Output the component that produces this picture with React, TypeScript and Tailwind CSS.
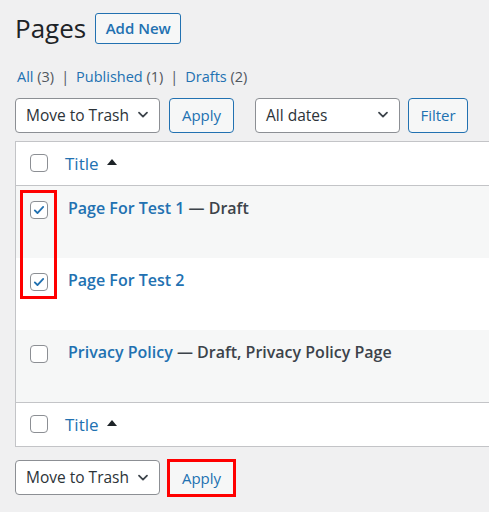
import React from "react";

const font = { fontFamily: '"Open Sans", "Noto Sans", sans-serif' };

const Chevron = () => (
  <svg width="16" height="16" viewBox="0 0 20 20" className="shrink-0">
    <path d="M5 7l5 5 5-5" fill="none" stroke="#3c434a" strokeWidth="2.2" strokeLinecap="round" strokeLinejoin="round" />
  </svg>
);

const Select = ({ label }: { label: string }) => (
  <div className="flex h-[35px] w-[145px] items-center justify-between rounded-[4px] border border-[#8c8f94] bg-white pl-[10px] pr-[8px] text-[15.5px] whitespace-nowrap text-[#2c3338]">
    <span>{label}</span>
    <Chevron />
  </div>
);

const Button = ({ label, w }: { label: string; w: string }) => (
  <div
    className={`flex h-[35px] items-center justify-center rounded-[4px] border border-[#2271b1] bg-[#f6f7f7] text-[15px] text-[#2271b1] ${w}`}
  >
    {label}
  </div>
);

const Checkbox = ({ checked }: { checked?: boolean }) => (
  <div className="flex h-[18px] w-[18px] items-center justify-center rounded-[4px] border border-[#8c8f94] bg-white">
    {checked && (
      <svg width="14" height="14" viewBox="0 0 20 20">
        <path d="M4 10.5l3.8 3.8L16 5.5" fill="none" stroke="#2271b1" strokeWidth="2.6" strokeLinecap="round" strokeLinejoin="round" />
      </svg>
    )}
  </div>
);

const rows = [
  { title: "Page For Test 1", state: " — Draft", checked: true, bg: "bg-[#f6f7f7]" },
  { title: "Page For Test 2", state: "", checked: true, bg: "bg-white" },
  { title: "Privacy Policy", state: " — Draft, Privacy Policy Page", checked: false, bg: "bg-[#f6f7f7]" },
];

const TitleHeader = ({ top }: { top?: boolean }) => (
  <div className={`flex h-[44px] items-center bg-white ${top ? "border-b" : "border-t"} border-[#c3c4c7]`}>
    <div className="w-[49px] pl-[14px]">
      <Checkbox />
    </div>
    <span className="text-[17px] text-[#2271b1]">Title</span>
    <svg width="10" height="8" viewBox="0 0 10 8" className="ml-[8px] mb-[3px]">
      <path d="M0 7L5 1l5 6z" fill="#1d2327" />
    </svg>
  </div>
);

export default function App() {
  return (
    <div className="min-h-[512px] w-[489px] overflow-hidden bg-[#f0f0f1] pl-[15px]" style={font}>
      <div className="flex items-center pt-[13px]">
        <h1 className="mr-[9px] text-[26px] leading-[31px] text-[#1d2327]">Pages</h1>
        <div className="flex h-[31px] w-[86px] items-center justify-center rounded-[3px] border border-[#2271b1] bg-[#f6f7f7] text-[15px] font-semibold text-[#2271b1]">
          Add New
        </div>
      </div>

      <div className="mt-[22px] flex items-center pl-[2px] text-[14.5px] text-[#50575e]">
        <span className="text-[#2271b1]">All</span>&nbsp;(3)
        <span className="mx-[7px]">|</span>
        <span className="text-[#2271b1]">Published</span>&nbsp;(1)
        <span className="mx-[7px]">|</span>
        <span className="text-[#2271b1]">Drafts</span>&nbsp;(2)
      </div>

      <div className="mt-[10px] flex items-center">
        <Select label="Move to Trash" />
        <div className="ml-[9px]">
          <Button label="Apply" w="w-[65px]" />
        </div>
        <div className="ml-[21px]">
          <Select label="All dates" />
        </div>
        <div className="ml-[8px]">
          <Button label="Filter" w="w-[60px]" />
        </div>
      </div>

      <div className="relative mt-[8px] w-[500px] border border-[#c3c4c7]">
        <TitleHeader top />
        {rows.map((r) => (
          <div key={r.title} className={`flex h-[72px] items-start pt-[10px] ${r.bg}`}>
            <div className="w-[50px] pl-[14px] pt-[5px]">
              <Checkbox checked={r.checked} />
            </div>
            <span className="pl-[2px] text-[16px] font-semibold text-[#2271b1]">{r.title}</span>
            {r.state && <span className="whitespace-pre text-[16px] font-semibold text-[#3c434a]">{r.state}</span>}
          </div>
        ))}
        <TitleHeader />
        <div className="absolute left-[4px] top-[48px] h-[109px] w-[37px] border-[3px] border-[#ff0000]" />
      </div>

      <div className="mt-[12px] flex items-center">
        <Select label="Move to Trash" />
        <div className="ml-[7px] flex h-[38px] w-[69px] items-center justify-center border-[3px] border-[#ff0000] bg-[#f6f7f7] text-[15px] text-[#2271b1]">
          Apply
        </div>
      </div>
    </div>
  );
}
